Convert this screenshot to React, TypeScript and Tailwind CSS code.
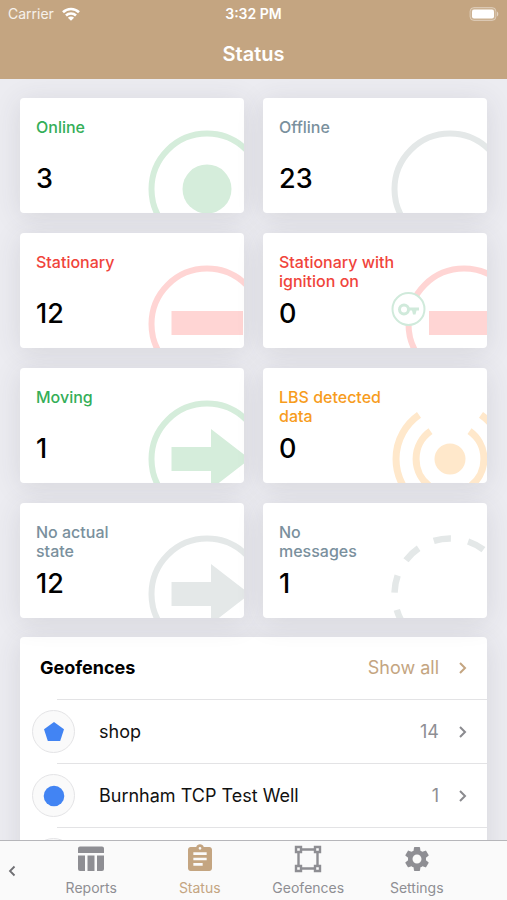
import React from "react";
import { MdAssignment, MdSettings } from "react-icons/md";

type Tone = "green" | "slate" | "red" | "orange";

const labelTone: Record<Tone, string> = {
  green: "text-[#34ae58]",
  slate: "text-[#7a909d]",
  red: "text-[#f0443b]",
  orange: "text-[#f79c1d]",
};

const artTone: Record<Tone, string> = {
  green: "text-[#d5eddb]",
  slate: "text-[#e4e8e8]",
  red: "text-[#ffd5d4]",
  orange: "text-[#ffe8cb]",
};

const Ring = ({ cx = 59 }: { cx?: number }) => (
  <circle cx={cx} cy="60" r="55.5" fill="none" stroke="currentColor" strokeWidth="6" />
);

const Arrow = () => (
  <path d="M23.5 48H63V30l39 30-39 30V72H23.5z" fill="currentColor" />
);

const art = {
  online: (
    <>
      <Ring />
      <circle cx="59" cy="60" r="24.5" fill="currentColor" />
    </>
  ),
  offline: <Ring />,
  stationary: (
    <>
      <Ring />
      <path d="M23.5 47H95v24H23.5z" fill="currentColor" />
    </>
  ),
  ignition: (
    <>
      <Ring cx={73} />
      <path d="M38 47h58v24H38z" fill="currentColor" />
      <g className="text-[#d0eadb]">
        <circle cx="17.5" cy="45" r="16" fill="#fff" stroke="currentColor" strokeWidth="2" />
        <circle cx="13" cy="45.5" r="4.5" fill="none" stroke="currentColor" strokeWidth="3" />
        <path d="M17 43.5h11v3h-2.500l-1 4h-2.500l-1-4h-4z" fill="currentColor" />
      </g>
    </>
  ),
  moving: (
    <>
      <Ring />
      <Arrow />
    </>
  ),
  lbs: (
    <>
      <circle cx="59" cy="60" r="15.5" fill="currentColor" />
      <g fill="none" stroke="currentColor" strokeWidth="7">
        <path d="M39.5 32.2a34 34 0 0 0 0 55.6M78.5 32.2a34 34 0 0 1 0 55.6" />
        <path d="M28 15.8a54 54 0 0 0 0 88.4M90 15.8a54 54 0 0 1 0 88.4" />
      </g>
    </>
  ),
  noMessages: (
    <circle
      cx="59"
      cy="60"
      r="55.5"
      fill="none"
      stroke="currentColor"
      strokeWidth="6.5"
      strokeDasharray="17.4 17.47"
      transform="rotate(-107 59 60)"
    />
  ),
};

type Card = { label: string; value: number; tone: Tone; art: React.ReactNode; wide?: boolean };

const cards: Card[] = [
  { label: "Online", value: 3, tone: "green", art: art.online },
  { label: "Offline", value: 23, tone: "slate", art: art.offline },
  { label: "Stationary", value: 12, tone: "red", art: art.stationary },
  { label: "Stationary with ignition on", value: 0, tone: "red", art: art.ignition, wide: true },
  { label: "Moving", value: 1, tone: "green", art: art.moving },
  { label: "LBS detected data", value: 0, tone: "orange", art: art.lbs },
  { label: "No actual state", value: 12, tone: "slate", art: art.moving },
  { label: "No messages", value: 1, tone: "slate", art: art.noMessages },
];

const cardShadow = "shadow-[0_4px_28px_rgba(60,60,70,0.12)]";

function StatusCard({ label, value, tone, art, wide }: Card) {
  return (
    <button
      type="button"
      className={`relative flex h-[115px] flex-col justify-between overflow-hidden rounded bg-white px-4 pt-5 pb-[15px] text-left ${cardShadow}`}
    >
      <svg
        aria-hidden="true"
        viewBox="0 0 96 84"
        className={`absolute right-0 bottom-0 h-[84px] w-24 ${artTone[tone]}`}
      >
        {art}
      </svg>
      <span
        className={`relative text-base leading-[19px] font-medium ${wide ? "w-[120px]" : "w-[103px]"} ${labelTone[tone]}`}
      >
        {label}
      </span>
      <span className="relative text-[27px] leading-[38px] font-medium text-black">{value}</span>
    </button>
  );
}

function Chevron({ className }: { className: string }) {
  return (
    <svg aria-hidden="true" viewBox="0 0 8 14" className={`h-3.5 w-2 ${className}`}>
      <path d="M1 2l5 5-5 5" fill="none" stroke="currentColor" strokeWidth="2" />
    </svg>
  );
}

const fences = [
  { name: "shop", count: 14, shape: <path d="M11 1l10 7.3L17.2 20H4.8L1 8.3z" /> },
  { name: "Burnham TCP Test Well", count: 1, shape: <circle cx="11" cy="11" r="10.3" /> },
];

const badge =
  "mr-6 flex size-[43px] items-center justify-center rounded-full border border-[#e4e4e6] bg-[#fafafa]";

const tabs = [
  {
    label: "Reports",
    icon: (
      <svg aria-hidden="true" viewBox="0 0 26 26" className="size-[26px]" fill="currentColor">
        <path d="M2 0.5h22a2 2 0 0 1 2 2v4.5H0V2.5a2 2 0 0 1 2-2zM0 9.5h7V25H2a2 2 0 0 1-2-2zM9.5 9.5h7V25h-7zM19 9.5h7V23a2 2 0 0 1-2 2h-5z" />
      </svg>
    ),
  },
  { label: "Status", active: true, icon: <MdAssignment aria-hidden="true" className="size-8" /> },
  {
    label: "Geofences",
    icon: (
      <svg aria-hidden="true" viewBox="0 0 28 28" className="size-7" fill="none" stroke="currentColor" strokeWidth="2.4">
        <path d="M2 2h5v5H2zM21 2h5v5h-5zM2 21h5v5H2zM21 21h5v5h-5zM7 4.5h14M7 23.5h14M4.5 7v14M23.5 7v14" />
      </svg>
    ),
  },
  { label: "Settings", icon: <MdSettings aria-hidden="true" className="size-[30px]" /> },
];

export default function App() {
  return (
    <div className="flex h-screen flex-col overflow-hidden bg-[#ececf1] font-[Inter,'Liberation_Sans',sans-serif]">
      <header className="bg-[#c4a581] text-white">
        <div className="grid h-7 grid-cols-3 items-center px-2 text-sm">
          <div className="flex items-center gap-2">
            <span className="text-white/85">Carrier</span>
            <svg role="img" aria-label="Wi-Fi" viewBox="0 0 18 14" className="h-3.5 w-[18px]" fill="none" stroke="currentColor" strokeWidth="2.6">
              <path d="M1 5.3a11.5 11.5 0 0 1 16 0M4 8.5a7.2 7.2 0 0 1 10 0" />
              <path d="M9 13.700L5.9 10.700a4.4 4.4 0 0 1 6.2 0z" fill="currentColor" stroke="none" />
            </svg>
          </div>
          <span className="text-center font-semibold">3:32 PM</span>
          <svg role="img" aria-label="Battery full" viewBox="0 0 31 14" className="h-3.5 w-[31px] justify-self-end">
            <rect x="2" y="0.5" width="26" height="13" rx="4" fill="#fff" fillOpacity="0.15" stroke="#fff" strokeOpacity="0.35" />
            <rect x="4" y="2.5" width="22" height="9" rx="2" fill="#fff" />
            <path d="M29 4.5a3 3 0 0 1 0 5z" fill="#fff" fillOpacity="0.5" />
          </svg>
        </div>
        <h1 className="flex h-[51px] items-center justify-center text-xl font-semibold">Status</h1>
      </header>

      <main className="min-h-0 flex-1 overflow-y-auto px-5 pt-[19px] [scrollbar-width:none]">
        <section aria-label="Statuses" className="grid grid-cols-2 gap-x-[19px] gap-y-5">
          {cards.map((card) => (
            <StatusCard key={card.label} {...card} />
          ))}
        </section>

        <section className={`mt-[19px] overflow-hidden rounded bg-white ${cardShadow}`}>
          <div className="flex h-[62px] items-center px-5">
            <h2 className="flex-1 text-lg font-bold text-black">Geofences</h2>
            <a href="#geofences" className="flex items-center gap-5 text-lg text-[#c4a581]">
              Show all
              <Chevron className="text-[#c4a581]" />
            </a>
          </div>
          <ul>
            {fences.map((fence) => (
              <li key={fence.name}>
                <div className="ml-[37px] h-px bg-[#e3e3e5]" />
                <a href="#fence" className="flex h-[63px] items-center pr-5 pl-3 text-lg">
                  <span className={badge}>
                    <svg aria-hidden="true" viewBox="0 0 22 22" className="size-[22px] fill-[#4284f3]">
                      {fence.shape}
                    </svg>
                  </span>
                  <span className="flex-1 text-[#111]">{fence.name}</span>
                  <span className="mr-5 text-[#8e8e93]">{fence.count}</span>
                  <Chevron className="text-[#8a8a8e]" />
                </a>
              </li>
            ))}
            <li aria-hidden="true">
              <div className="ml-[37px] h-px bg-[#e3e3e5]" />
              <div className="flex h-[63px] items-center pl-3">
                <span className={badge} />
              </div>
            </li>
          </ul>
        </section>
      </main>

      <nav className="flex h-[60px] border-t border-[#b6b6ba] bg-[#fafafa] pr-9 text-[#8e8e93]">
        <button type="button" aria-label="Back" className="flex w-[37px] items-center pl-2">
          <svg aria-hidden="true" viewBox="0 0 8 12" className="h-3 w-2">
            <path d="M6.5 1.5L2 6l4.5 4.5" fill="none" stroke="#6f6f73" strokeWidth="1.8" />
          </svg>
        </button>
        {tabs.map((tab) => (
          <button
            key={tab.label}
            type="button"
            aria-current={tab.active ? "page" : undefined}
            className={`flex flex-1 flex-col items-center pt-0.5 text-sm ${tab.active ? "text-[#c4a581]" : ""}`}
          >
            <span className="flex h-8 items-center">{tab.icon}</span>
            <span className="mt-[3px]">{tab.label}</span>
          </button>
        ))}
      </nav>
    </div>
  );
}
